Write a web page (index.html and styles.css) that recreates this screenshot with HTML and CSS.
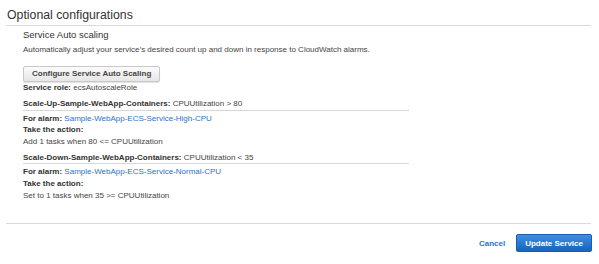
FILE: index.html
```html
<!DOCTYPE html>
<html>
<head>
<meta charset="utf-8">
<link rel="stylesheet" href="styles.css">
</head>
<body>
<div class="page">
  <h2 class="title">Optional configurations</h2>
  <section class="section">
    <h3 class="subtitle">Service Auto scaling</h3>
    <p class="desc">Automatically adjust your service’s desired count up and down in response to CloudWatch alarms.</p>
    <button class="btn">Configure Service Auto Scaling</button>
    <div class="row"><b>Service role:</b> ecsAutoscaleRole</div>
    <div class="policy">
      <div class="policy-head"><b>Scale-Up-Sample-WebApp-Containers:</b> CPUUtilization &gt; 80</div>
      <div class="policy-body">
        <div class="row"><b>For alarm:</b> <a class="link">Sample-WebApp-ECS-Service-High-CPU</a></div>
        <div class="row"><b>Take the action:</b></div>
        <div class="row">Add 1 tasks when 80 &lt;= CPUUtilization</div>
      </div>
    </div>
    <div class="policy">
      <div class="policy-head"><b>Scale-Down-Sample-WebApp-Containers:</b> CPUUtilization &lt; 35</div>
      <div class="policy-body">
        <div class="row"><b>For alarm:</b> <a class="link">Sample-WebApp-ECS-Service-Normal-CPU</a></div>
        <div class="row"><b>Take the action:</b></div>
        <div class="row">Set to 1 tasks when 35 &gt;= CPUUtilization</div>
      </div>
    </div>
  </section>
  <div class="footer">
    <a class="cancel">Cancel</a>
    <button class="btn-primary">Update Service</button>
  </div>
</div>
</body>
</html>
```
FILE: styles.css
```css
* { box-sizing: border-box; }
html, body { margin: 0; padding: 0; background: #fff; }
body {
  font-family: "Liberation Sans", Arial, sans-serif;
  color: #444;
  font-size: 8px;
}
.page {
  padding: 0 8px 0 6px;
}
.title {
  margin: 8px 0 0 0;
  padding: 0 0 3px 1px;
  font-size: 12.3px;
  line-height: 14px;
  font-weight: normal;
  color: #333;
  border-bottom: 1px solid #dadada;
}
.section {
  padding: 3px 0 0 17px;
  height: 197px;
}
.subtitle {
  margin: 0;
  font-size: 9.5px;
  line-height: 12px;
  font-weight: normal;
  color: #333;
}
.desc {
  margin: 3px 0 0 0;
  line-height: 12px;
}
.btn {
  display: block;
  margin-top: 10px;
  height: 16px;
  padding: 0 8px;
  font-family: inherit;
  font-size: 8px;
  font-weight: bold;
  line-height: 14px;
  color: #444;
  background: linear-gradient(#fbfbfb, #e6e6e6);
  border: 1px solid #c8c8c8;
  border-radius: 2px;
  box-shadow: 0 1px 1px rgba(0,0,0,0.12);
}
.row {
  line-height: 11.6px;
}
.row b { color: #333; }
.policy {
  width: 386px;
}
.policy-head {
  margin-top: 4.4px;
  line-height: 11.6px;
  border-bottom: 1px solid #d6d6d6;
}
.policy-head b { color: #333; }
.policy-body {
  margin-top: 2px;
}
.link {
  color: #2d72c8;
  text-decoration: none;
}
.footer {
  border-top: 1px solid #dadada;
  display: flex;
  justify-content: flex-end;
  align-items: center;
  gap: 11px;
  padding-top: 10px;
}
.cancel {
  color: #2d72c8;
  font-weight: bold;
  font-size: 8px;
}
.btn-primary {
  height: 18px;
  padding: 0 8px;
  margin-right: -1px;
  font-family: inherit;
  font-size: 8px;
  font-weight: bold;
  color: #fff;
  background: linear-gradient(#3d90e2, #1564bd);
  border: 1px solid #1a5dab;
  border-radius: 2px;
  box-shadow: 0 1px 1px rgba(0,0,0,0.15);
}
```
